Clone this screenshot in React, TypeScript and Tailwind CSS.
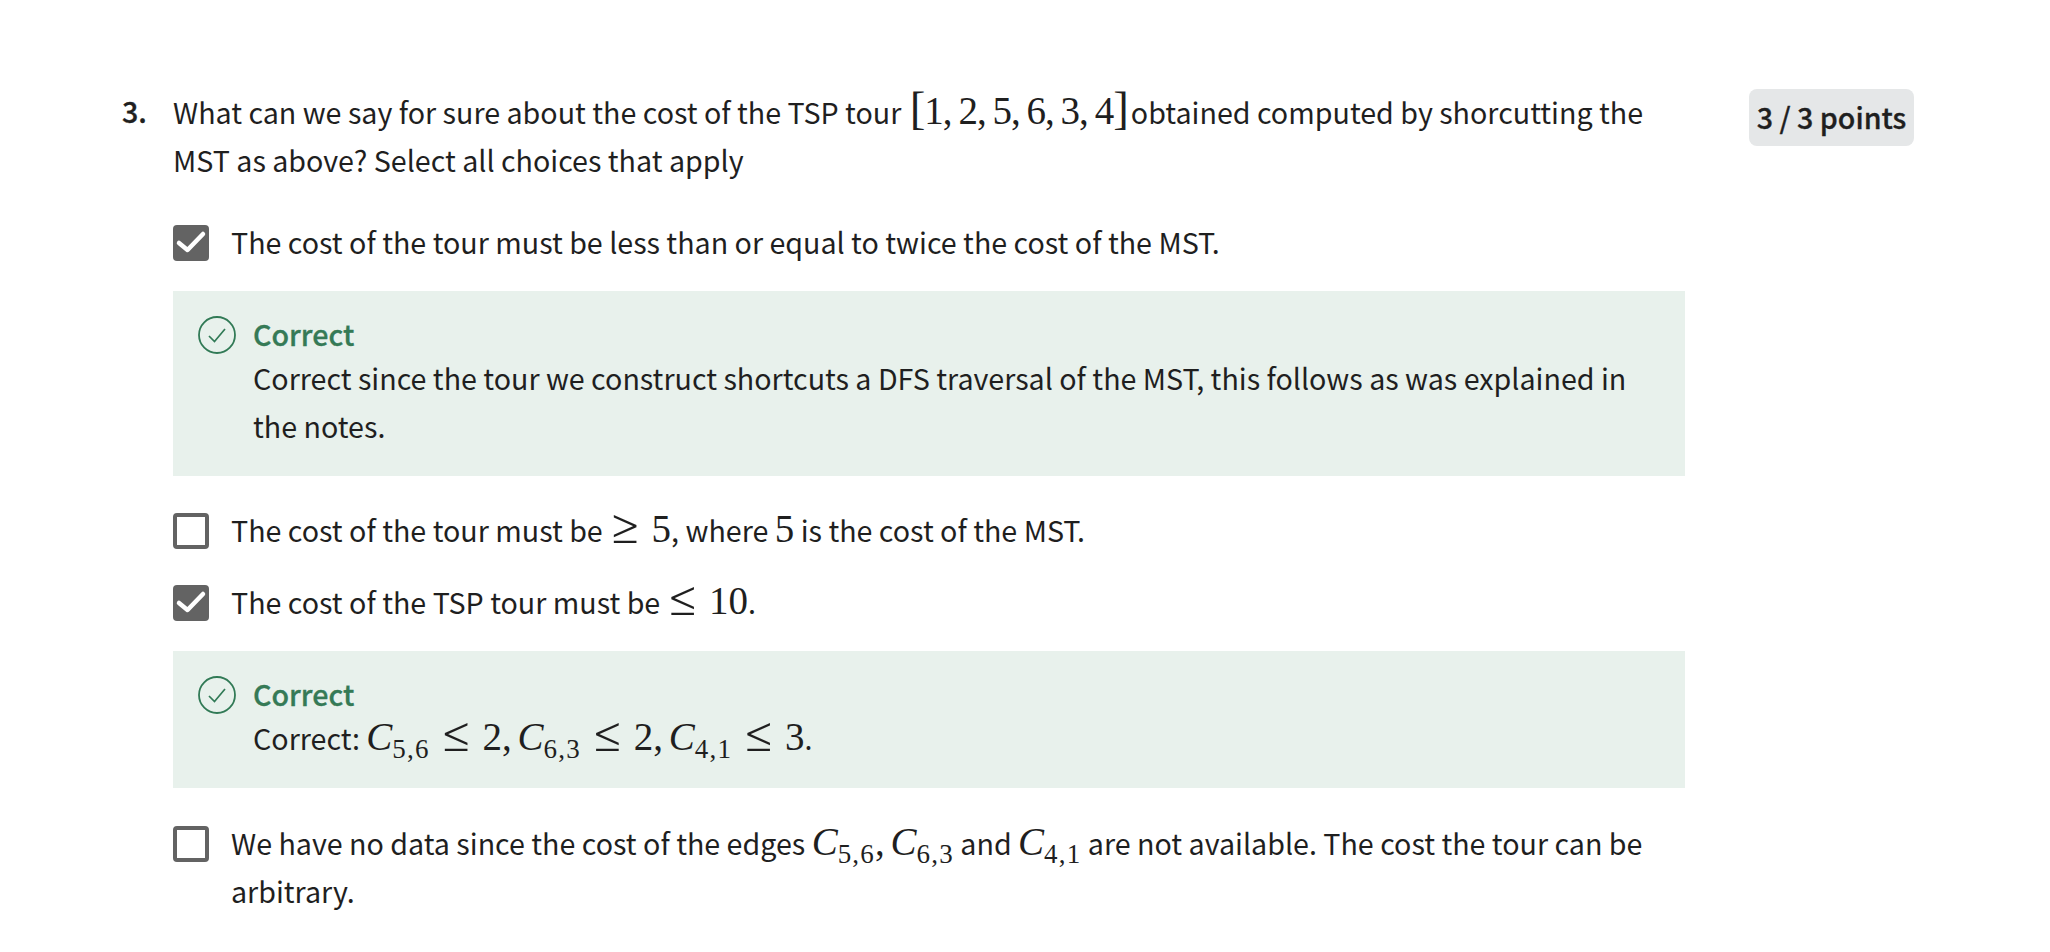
import type { ReactNode } from "react";

const serif = "font-['Liberation_Serif',serif]";

function M({ children, className = "" }: { children: ReactNode; className?: string }) {
  return <span className={`${serif} text-[39px] leading-[0] text-[#1f1f1f] ${className}`}>{children}</span>;
}

function Rel({ children, className = "mx-[9px]" }: { children: ReactNode; className?: string }) {
  return (
    <span className={`relative top-[3px] font-['Inter',sans-serif] text-[54px] leading-[0] font-extralight ${className}`}>{children}</span>
  );
}

function Cost({ sub }: { sub: string }) {
  return (
    <span className="whitespace-nowrap">
      <M className="italic">C</M>
      <span className={`relative top-[8px] ${serif} text-[27px] leading-[0] tracking-[1.2px]`}>{sub}</span>
    </span>
  );
}

function CheckBox({ checked }: { checked?: boolean }) {
  if (checked) {
    return (
      <div className="mt-[6px] h-9 w-9 shrink-0 rounded-[4px] bg-[#636363]">
        <svg width="36" height="36" viewBox="0 0 36 36" fill="none">
          <path d="M6 18 L14.5 25 L30 9" stroke="#fff" strokeWidth="4.5" strokeLinecap="round" strokeLinejoin="round" />
        </svg>
      </div>
    );
  }
  return <div className="mt-[6px] h-9 w-9 shrink-0 rounded-[4px] border-4 border-[#636363] bg-white" />;
}

function Option({ checked, children }: { checked?: boolean; children: ReactNode }) {
  return (
    <div className="flex gap-[22px]">
      <CheckBox checked={checked} />
      <div className="-mt-px pb-px text-[28.65px] leading-[48px]">{children}</div>
    </div>
  );
}

function Feedback({ children }: { children: ReactNode }) {
  return (
    <div className="flex gap-[17px] bg-[#e8f1ec] pt-[25px] pb-[26px] pl-[25px] pr-[40px]">
      <svg className="shrink-0" width="38" height="38" viewBox="0 0 38 38" fill="none">
        <circle cx="19" cy="19" r="18" stroke="#317a56" strokeWidth="1.8" />
        <path d="M11 20 L16.5 25.5 L27 13" stroke="#317a56" strokeWidth="1.7" />
      </svg>
      <div>
        <div className="-mt-px pb-px text-[28.65px] leading-[38px] font-medium text-[#357a56] [-webkit-text-stroke:0.3px]">Correct</div>
        <div className="text-[28.65px] leading-[48px]">{children}</div>
      </div>
    </div>
  );
}

export default function App() {
  return (
    <div className="min-h-[952px] bg-white pt-[89px] pl-[122px] font-['Noto_Sans_CJK_SC','Noto_Sans',sans-serif] text-[#1f1f1f]">
      <div className="flex">
        <div className="w-[51px] shrink-0 text-[28.65px] leading-[44px] font-medium [-webkit-text-stroke:0.3px]">3.</div>
        <div className="w-[1512px] shrink-0">
          <div className="-mt-px w-[1500px] pb-px text-[28.65px] leading-[48px]">
            What can we say for sure about the cost of the TSP tour{" "}
            <M className="ml-[2px] mr-[3px] tracking-[-1px]">
              <span className="text-[47px]">[</span>1,&#8201;2,&#8201;5,&#8201;6,&#8201;3,&#8201;4<span className="text-[47px]">]</span>
            </M>
            obtained computed by shorcutting the MST as above? Select all choices that apply
          </div>
          <div className="mt-[34px]">
            <Option checked>The cost of the tour must be less than or equal to twice the cost of the MST.</Option>
          </div>
          <div className="mt-[24px]">
            <Feedback>
              Correct since the tour we construct shortcuts a DFS traversal of the MST, this follows as was explained in the notes.
            </Feedback>
          </div>
          <div className="mt-[31px]">
            <Option>
              The cost of the tour must be<Rel className="ml-[5px] mr-[9px]">≥</Rel><M>5</M>, where <M>5</M> is the cost of the MST.
            </Option>
          </div>
          <div className="mt-[24px]">
            <Option checked>
              The cost of the TSP tour must be<Rel className="ml-[5px] mr-[9px]">≤</Rel><M>10</M>.
            </Option>
          </div>
          <div className="mt-[24px]">
            <Feedback>
              Correct: <Cost sub="5,6" /><Rel>≤</Rel><M>2,</M>&#8201;<Cost sub="6,3" /><Rel>≤</Rel><M>2,</M>&#8201;<Cost sub="4,1" /><Rel>≤</Rel><M>3</M>.
            </Feedback>
          </div>
          <div className="mt-[32px]">
            <Option>
              We have no data since the cost of the edges <Cost sub="5,6" /><M>,</M>&#8201;<Cost sub="6,3" /> and <Cost sub="4,1" /> are not available. The cost the tour can be arbitrary.
            </Option>
          </div>
        </div>
        <div className="ml-[64px] flex h-[57px] w-[165px] shrink-0 items-center justify-center rounded-[8px] bg-[#e5e7e8] text-[28.65px] leading-none font-medium [-webkit-text-stroke:0.3px]">
          3 / 3 points
        </div>
      </div>
    </div>
  );
}
